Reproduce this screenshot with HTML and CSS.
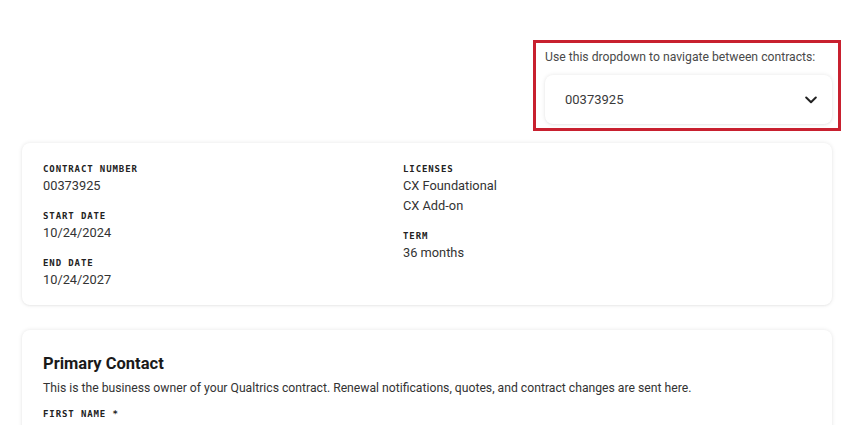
FILE: index.html
```html
<!DOCTYPE html>
<html lang="en">
<head>
<meta charset="utf-8">
<title>Contract</title>
<link rel="stylesheet" href="styles.css">
</head>
<body>
<div class="page">
  <div class="top-row">
    <div class="nav-box">
      <div class="nav-label">Use this dropdown to navigate between contracts:</div>
      <div class="select">
        <span class="select-value">00373925</span>
        <svg class="chevron" width="12" height="8" viewBox="0 0 12 8" aria-hidden="true">
          <path d="M1.2 1.5 L6 6.2 L10.8 1.5" fill="none" stroke="#222" stroke-width="2" stroke-linecap="round" stroke-linejoin="round"/>
        </svg>
      </div>
    </div>
  </div>

  <section class="card details">
    <div class="col">
      <div class="field">
        <div class="label">CONTRACT NUMBER</div>
        <div class="value">00373925</div>
      </div>
      <div class="field">
        <div class="label">START DATE</div>
        <div class="value">10/24/2024</div>
      </div>
      <div class="field">
        <div class="label">END DATE</div>
        <div class="value">10/24/2027</div>
      </div>
    </div>
    <div class="col">
      <div class="field">
        <div class="label">LICENSES</div>
        <div class="value">CX Foundational</div>
        <div class="value">CX Add-on</div>
      </div>
      <div class="field">
        <div class="label">TERM</div>
        <div class="value">36 months</div>
      </div>
    </div>
  </section>

  <section class="card contact">
    <h2 class="heading">Primary Contact</h2>
    <p class="desc">This is the business owner of your Qualtrics contract. Renewal notifications, quotes, and contract changes are sent here.</p>
    <div class="label">FIRST NAME *</div>
  </section>
</div>
</body>
</html>
```

FILE: styles.css
```css
* { box-sizing: border-box; }

html, body {
  margin: 0;
  padding: 0;
  background: #ffffff;
  overflow: hidden;
}

body {
  font-family: Roboto, "Liberation Sans", sans-serif;
  color: #2b2b2b;
}

.page {
  padding: 40px 18px 0 22px;
  display: flex;
  flex-direction: column;
}

.top-row {
  display: flex;
  justify-content: flex-end;
}

.nav-box {
  width: 308px;
  height: 91px;
  margin-right: -9px;
  border: 3px solid #c8202f;
  padding: 6px 6px 4px 9px;
  display: flex;
  flex-direction: column;
}

.nav-label {
  font-size: 12.2px;
  line-height: 17px;
  color: #4a4a4a;
}

.select {
  margin-top: 9px;
  height: 49px;
  border-radius: 8px;
  background: #fff;
  box-shadow: 0 0 4px rgba(0, 0, 0, 0.10), 0 1px 2px rgba(0, 0, 0, 0.04);
  display: flex;
  align-items: center;
  justify-content: space-between;
  padding: 0 15px 0 20px;
}

.select-value {
  font-size: 13px;
  color: #3a3a3a;
}

.chevron { display: block; }

.card {
  background: #fff;
  border-radius: 8px;
  box-shadow: 0 0 4px rgba(0, 0, 0, 0.10), 0 1px 2px rgba(0, 0, 0, 0.04);
}

.details {
  margin-top: 12px;
  padding: 19px 20px 15px 21px;
  display: grid;
  grid-template-columns: 360px 1fr;
}

.field { margin-bottom: 13px; }
.field:last-child { margin-bottom: 0; }

.label {
  font-family: "DejaVu Sans Mono", "Liberation Mono", monospace;
  font-weight: bold;
  font-size: 9px;
  line-height: 14px;
  letter-spacing: 0.9px;
  color: #222;
}

.value {
  font-size: 12.8px;
  line-height: 20px;
  color: #333;
}

.contact {
  margin-top: 25px;
  padding: 24px 20px 20px 21px;
  height: 120px;
}

.heading {
  margin: 0;
  font-size: 16.5px;
  line-height: 20px;
  font-weight: bold;
  color: #1a1a1a;
}

.desc {
  margin: 5px 0 10px;
  font-size: 12.2px;
  line-height: 18px;
  color: #333;
}
```
